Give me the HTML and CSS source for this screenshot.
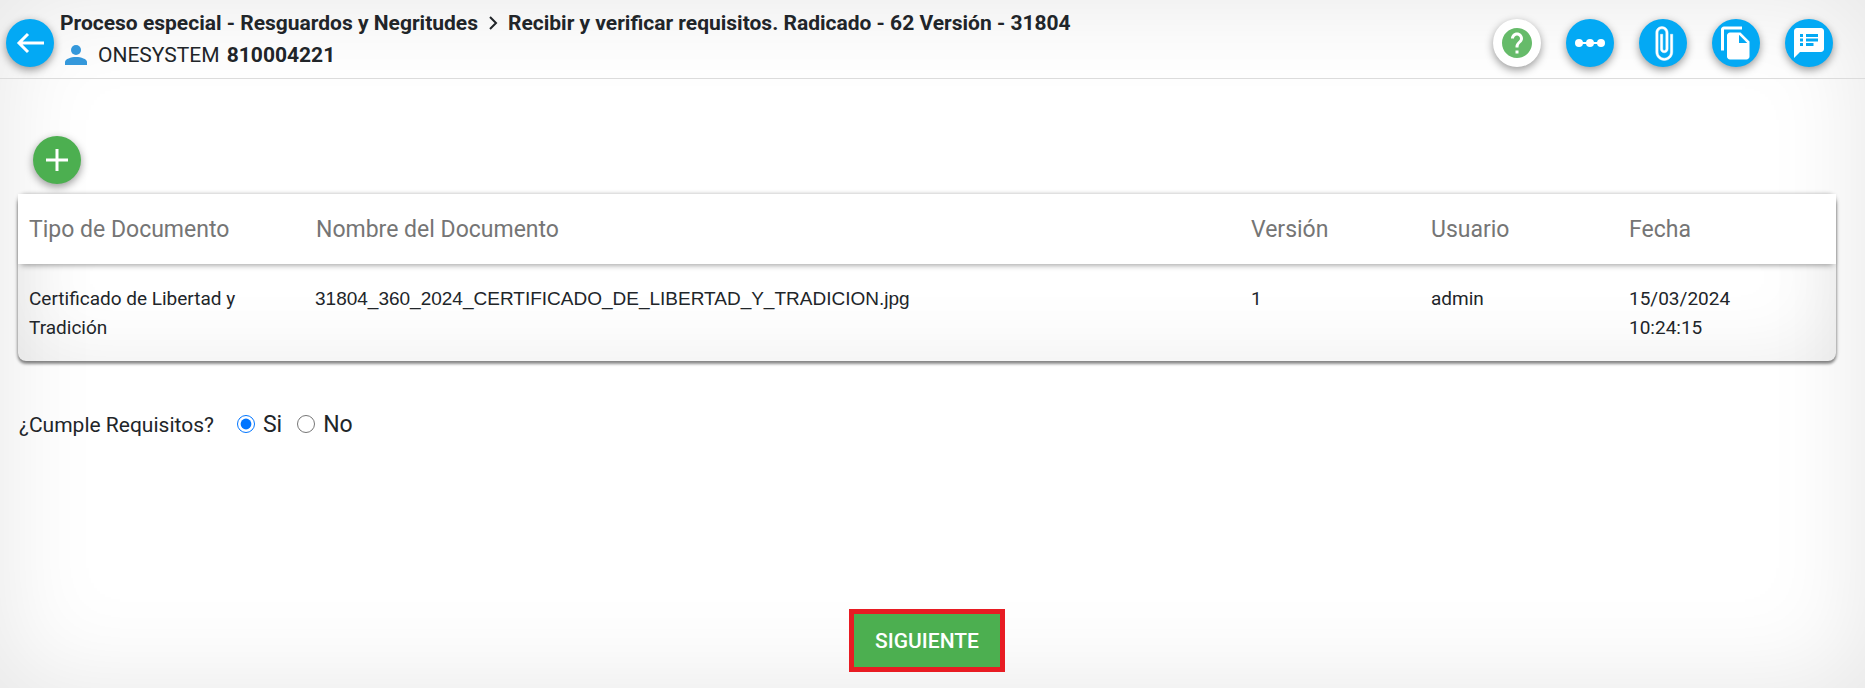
FILE: index.html
```html
<!DOCTYPE html>
<html lang="es">
<head>
    <meta charset="UTF-8">
    <meta name="viewport" content="width=device-width, initial-scale=1.0">
    <title>Recibir y verificar requisitos</title>
    <link rel="stylesheet" href="styles.css">
</head>
<body>
    <header class="topbar">
        <button class="fab blue" type="button" aria-label="Volver">
            <svg width="30" height="32" viewBox="0 0 30 32" fill="none" stroke="#fff" stroke-width="3"><path d="M29 16H4M13 7l-9 9 9 9"/></svg>
        </button>

        <div class="heading">
            <h1>
                <span>Proceso especial - Resguardos y Negritudes</span>
                <svg width="10" height="16" viewBox="0 0 10 16" fill="none" stroke="#212529" stroke-width="2"><path d="M2 2l6 6-6 6"/></svg>
                <span>Recibir y verificar requisitos. Radicado - 62 Versión - 31804</span>
            </h1>
            <p class="user">
                <svg width="22" height="20" viewBox="0 0 22 20" fill="#3498db"><circle cx="11" cy="5" r="5"/><path d="M0 20v-3c0-3 6-5 11-5s11 2 11 5v3z"/></svg>
                <span>ONESYSTEM <strong>810004221</strong></span>
            </p>
        </div>

        <nav class="actions">
            <button class="fab white" type="button" aria-label="Ayuda">
                <svg width="36" height="36" viewBox="0 0 24 24" fill="#66bb6a"><path d="M12 2C6.48 2 2 6.48 2 12s4.480 10 10 10 10-4.480 10-10S17.520 2 12 2zm1 17h-2v-2h2v2zm2.070-7.750l-.9.920C13.450 12.900 13 13.500 13 15h-2v-.5c0-1.100.450-2.100 1.170-2.830l1.240-1.260c.370-.360.590-.860.590-1.410 0-1.100-.9-2-2-2s-2 .9-2 2H8c0-2.210 1.790-4 4-4s4 1.790 4 4c0 .880-.360 1.680-.930 2.250z"/></svg>
            </button>
            <button class="fab blue" type="button" aria-label="Flujo">
                <svg width="32" height="10" viewBox="0 0 32 10" fill="#fff"><path d="M4 4h24v2H4z"/><circle cx="5" cy="5" r="4"/><circle cx="16" cy="5" r="4"/><circle cx="27" cy="5" r="4"/></svg>
            </button>
            <button class="fab blue" type="button" aria-label="Adjuntos">
                <svg width="37" height="37" viewBox="0 0 24 24" fill="#fff" stroke="#fff" stroke-width=".3"><path d="M16.500 6v11.500c0 2.210-1.790 4-4 4s-4-1.790-4-4V5c0-1.380 1.120-2.500 2.500-2.500s2.500 1.120 2.500 2.500v10.500c0 .55-.45 1-1 1s-1-.45-1-1V6H10v9.500c0 1.380 1.120 2.500 2.500 2.500s2.500-1.120 2.500-2.500V5c0-2.210-1.790-4-4-4S7 2.790 7 5v12.500c0 3.040 2.460 5.500 5.500 5.500s5.500-2.460 5.500-5.500V6h-1.500z"/></svg>
            </button>
            <button class="fab blue" type="button" aria-label="Documentos">
                <svg width="36" height="36" viewBox="0 0 24 24" fill="#fff"><path d="M16 1H4c-1.100 0-2 .9-2 2v14h2V3h12V1zm-1 4l6 6v10c0 1.100-.9 2-2 2H7.990C6.890 23 6 22.100 6 21l.010-14c0-1.100.890-2 1.990-2h7zm-1 7h5.500L14 6.500V12z"/></svg>
            </button>
            <button class="fab blue" type="button" aria-label="Comentarios">
                <svg width="36" height="36" viewBox="0 0 24 24" fill="#fff"><path d="M20 2H4c-1.100 0-1.990.9-1.990 2L2 22l4-4h14c1.100 0 2-.9 2-2V4c0-1.100-.9-2-2-2zM8 14H6v-2h2v2zm0-3H6V9h2v2zm0-3H6V6h2v2zm7 6h-5v-2h5v2zm3-3h-8V9h8v2zm0-3h-8V6h8v2z"/></svg>
            </button>
        </nav>
    </header>

    <main class="content">
        <button class="fab green add" type="button" aria-label="Agregar documento">
            <svg width="22" height="22" viewBox="0 0 22 22" stroke="#fff" stroke-width="3"><path d="M11 0v22M0 11h22"/></svg>
        </button>

        <div class="card">
            <table>
                <thead>
                    <tr>
                        <th class="type">Tipo de Documento</th>
                        <th>Nombre del Documento</th>
                        <th class="version">Versión</th>
                        <th class="username">Usuario</th>
                        <th class="date">Fecha</th>
                    </tr>
                </thead>
                <tbody>
                    <tr>
                        <td>Certificado de Libertad y Tradición</td>
                        <td class="file">31804_360_2024_CERTIFICADO_DE_LIBERTAD_Y_TRADICION.jpg</td>
                        <td>1</td>
                        <td>admin</td>
                        <td>15/03/2024 10:24:15</td>
                    </tr>
                </tbody>
            </table>
        </div>

        <fieldset class="question">
            <legend>¿Cumple Requisitos?</legend>
            <label><input type="radio" name="cumple" value="si" checked> Si</label>
            <label><input type="radio" name="cumple" value="no"> No</label>
        </fieldset>

        <button class="next" type="button">SIGUIENTE</button>
    </main>
</body>
</html>
```
FILE: styles.css
```css
* {
    box-sizing: border-box;
}

body {
    font-family: Roboto, sans-serif;
    font-size: 19px;
    color: #212529;
    margin: 0;
    min-height: 100vh;
    display: flex;
    flex-direction: column;
    background: #fff;
    box-shadow: inset 0 0 100px rgba(0, 0, 0, 0.1);
}

button {
    border: none;
    padding: 0;
    font-family: inherit;
    cursor: pointer;
}

.topbar {
    display: flex;
    align-items: flex-start;
    padding: 7px 32px 7px 6px;
    border-bottom: 1px solid #dcdcdc;
}

.heading {
    flex: 1;
    margin-left: 6px;
}

.heading h1,
.user {
    display: flex;
    align-items: center;
    margin: 0;
    font-size: 21px;
    line-height: 32px;
}

.heading h1 {
    font-weight: 700;
    gap: 10px;
}

.user {
    gap: 11px;
    padding-left: 5px;
}

.user strong {
    margin-left: 2px;
    font-weight: 700;
}

.fab {
    display: flex;
    align-items: center;
    justify-content: center;
    width: 48px;
    height: 48px;
    border-radius: 50%;
    box-shadow: 0 3px 8px rgba(0, 0, 0, 0.4);
}

.topbar .fab {
    margin-top: 12px;
}

.blue {
    background: #03a9f4;
}

.green {
    background: #4caf50;
}

.white {
    background: #fff;
}

.actions {
    display: flex;
    gap: 25px;
}

.content {
    flex: 1;
    display: flex;
    flex-direction: column;
    padding: 57px 29px 16px 18px;
}

.add {
    margin: 0 0 10px 15px;
}

.card {
    border-radius: 8px;
    box-shadow: 0 3px 3px rgba(0, 0, 0, 0.4), 0 0 4px rgba(0, 0, 0, 0.3), inset 0 0 80px rgba(0, 0, 0, 0.08);
}

table {
    width: 100%;
    table-layout: fixed;
    border-collapse: collapse;
}

thead {
    background: #fff;
    box-shadow: 0 4px 6px -3px rgba(0, 0, 0, 0.4);
}

th {
    height: 70px;
    padding: 0 11px;
    text-align: left;
    font-size: 23px;
    font-weight: 400;
    color: #757575;
}

td {
    padding: 20px 11px 19px;
    line-height: 29px;
    vertical-align: top;
}

.file {
    padding-left: 10px;
    font-family: "Liberation Sans", Arial, sans-serif;
}

.type {
    width: 287px;
}

.version {
    width: 180px;
}

.username {
    width: 198px;
}

.date {
    width: 218px;
}

td:last-child {
    padding-right: 80px;
}

.question {
    display: flex;
    align-items: center;
    gap: 15px;
    margin: 48px 0 0;
    padding: 0 0 0 1px;
    border: none;
}

.question legend {
    float: left;
    padding: 0;
    margin-right: 8px;
    font-size: 21px;
    line-height: 32px;
}

.question label {
    display: flex;
    align-items: center;
    gap: 8px;
    font-size: 23px;
    line-height: 28px;
}

.question input {
    width: 18px;
    height: 18px;
    margin: 0 0 3px;
    accent-color: #0075ff;
}

.next {
    align-self: center;
    margin-top: auto;
    width: 156px;
    height: 63px;
    border: 5px solid #e81c23;
    background: #4caf50;
    color: #fff;
    font-size: 21px;
    font-weight: 500;
}
```
